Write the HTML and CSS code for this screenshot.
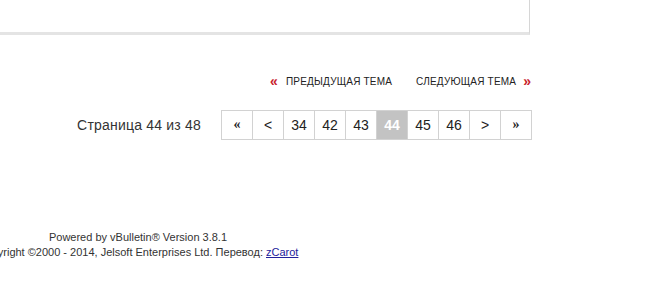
FILE: index.html
```html
<!DOCTYPE html>
<html>
<head>
<meta charset="utf-8">
<link rel="stylesheet" href="styles.css">
</head>
<body>
<div class="wrap">
  <div class="panel"></div>
  <div class="threadnav">
    <a class="prev" href="#"><span class="chev">«</span><span>Предыдущая тема</span></a>
    <a class="next" href="#"><span>Следующая тема</span><span class="chev">»</span></a>
  </div>
  <div class="pager">
    <span class="pageinfo">Страница 44 из 48</span>
    <div class="pages">
      <a class="cell bold" href="#">«</a>
      <a class="cell" href="#">&lt;</a>
      <a class="cell" href="#">34</a>
      <a class="cell" href="#">42</a>
      <a class="cell" href="#">43</a>
      <span class="cell current">44</span>
      <a class="cell" href="#">45</a>
      <a class="cell" href="#">46</a>
      <a class="cell" href="#">&gt;</a>
      <a class="cell bold" href="#">»</a>
    </div>
  </div>
</div>
<div class="footer">
  <div>Powered by vBulletin® Version 3.8.1</div>
  <div>Copyright ©2000 - 2014, Jelsoft Enterprises Ltd. Перевод: <a href="#">zCarot</a></div>
</div>
</body>
</html>
```
FILE: styles.css
```css
html, body {
  margin: 0;
  padding: 0;
  background: #ffffff;
}
body {
  font-family: "Liberation Sans", Arial, sans-serif;
  color: #222;
}
.wrap {
  width: 532px;
}
.panel {
  width: 529px;
  height: 32px;
  background: #fff;
  border-right: 1px solid #d6d6d6;
  border-bottom: 3px solid #e4e4e4;
}
.threadnav {
  margin-top: 39px;
  display: flex;
  justify-content: flex-end;
  gap: 24px;
  padding-right: 1px;
  height: 16px;
  line-height: 16px;
  font-size: 10px;
  letter-spacing: 0.2px;
  text-transform: uppercase;
}
.threadnav a {
  color: #222;
  text-decoration: none;
  display: flex;
  align-items: center;
  gap: 8px;
}
.threadnav .next {
  gap: 7px;
}
.chev {
  color: #c8232c;
  font-weight: bold;
  font-size: 14px;
  line-height: 16px;
  letter-spacing: 0;
  position: relative;
  top: -1px;
}
.pager {
  margin-top: 20px;
  display: flex;
  justify-content: flex-end;
  align-items: center;
  gap: 20px;
}
.pageinfo {
  font-size: 14px;
  letter-spacing: 0.2px;
  color: #333;
}
.pages {
  display: flex;
  border: 1px solid #d2d2d2;
}
.cell {
  width: 30px;
  height: 28px;
  line-height: 28px;
  text-align: center;
  font-size: 14px;
  color: #222;
  text-decoration: none;
  border-left: 1px solid #d2d2d2;
}
.cell:first-child {
  border-left: none;
}
.cell.bold {
  font-weight: bold;
  font-family: "Liberation Serif", serif;
  font-size: 14px;
}
.cell.current {
  background: #c3c3c3;
  color: #fff;
  font-weight: bold;
}
.footer {
  margin-top: 90px;
  margin-left: -62px;
  width: 400px;
  text-align: center;
  font-size: 11px;
  line-height: 15px;
  color: #333;
}
.footer a {
  color: #22229c;
  text-decoration: underline;
}
```
